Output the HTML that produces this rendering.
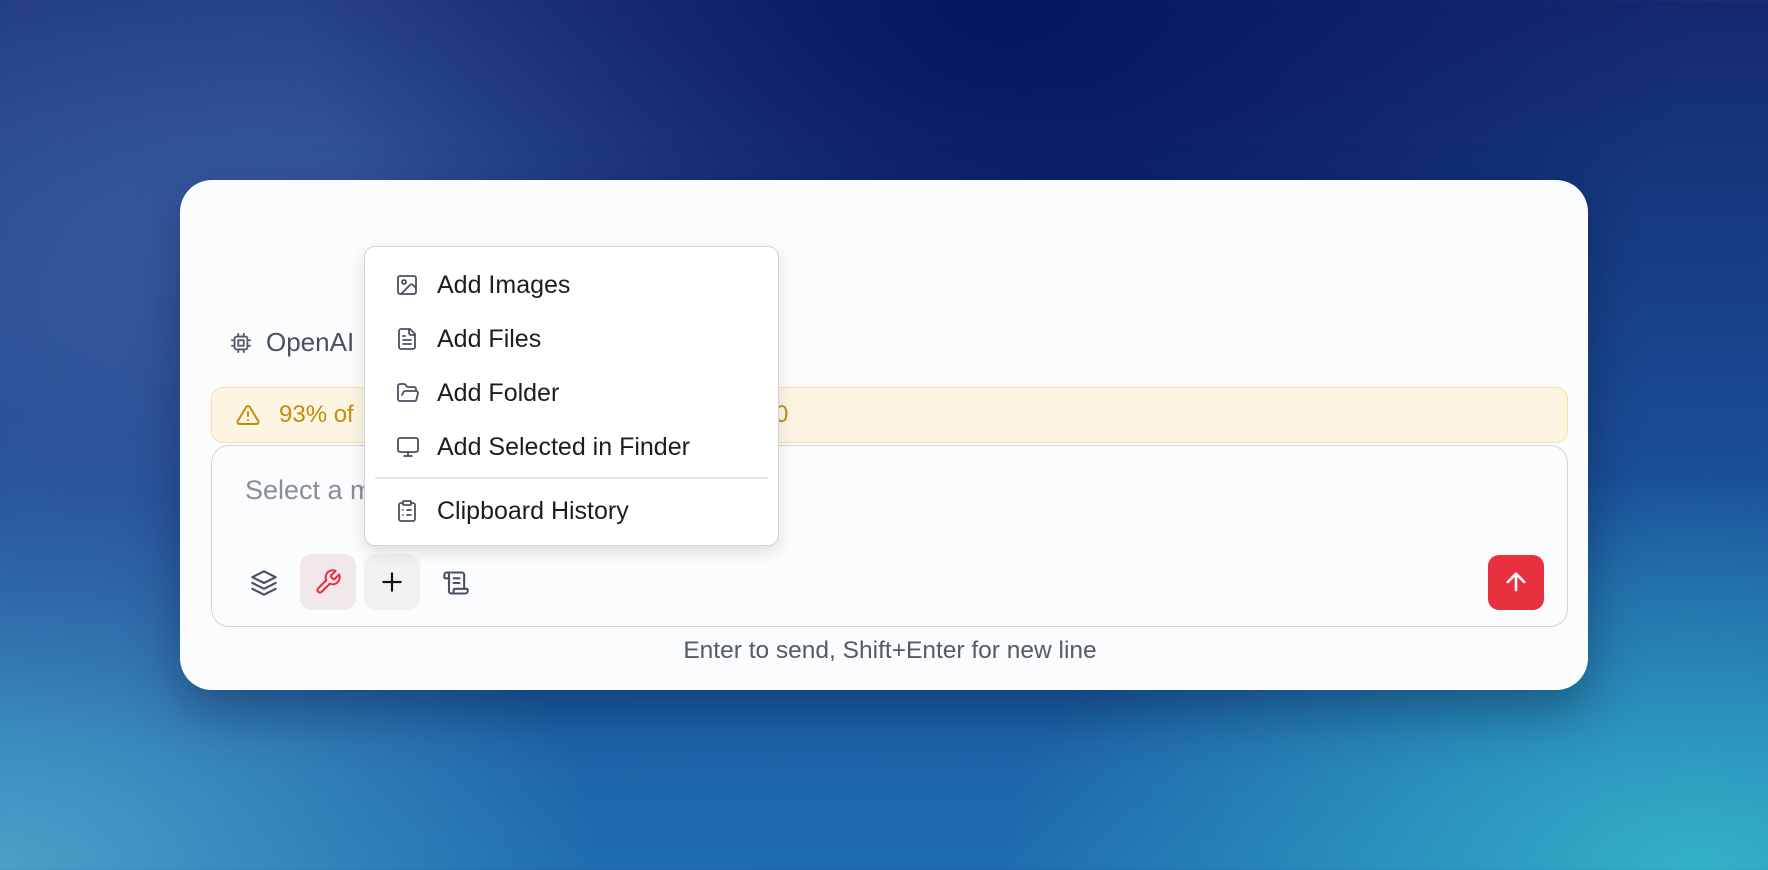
<!DOCTYPE html>
<html><head><meta charset="utf-8"><style>
*{margin:0;padding:0;box-sizing:border-box}
body{width:1768px;height:870px;overflow:hidden;font-family:"Liberation Sans",sans-serif;position:relative;
background:
radial-gradient(ellipse 700px 500px at 1000px 0px,#061560 0%,rgba(6,21,96,0) 100%),
radial-gradient(ellipse 900px 500px at 250px 250px,#3a5aa0 0%,rgba(58,90,160,0) 100%),
radial-gradient(ellipse 700px 400px at 1700px 870px,#33b0c8 0%,rgba(51,176,200,0) 100%),
radial-gradient(ellipse 600px 400px at 0px 870px,#4aa0c8 0%,rgba(74,160,200,0) 100%),
linear-gradient(180deg,#14286e 0%,#1a4f98 55%,#1f6cb0 100%);}
.abs{position:absolute}
.card{left:180px;top:180px;width:1408px;height:510px;background:#fbfcfe;border-radius:32px;box-shadow:0 20px 50px rgba(0,10,40,.35)}
.txt{white-space:nowrap;line-height:1}
svg{display:block}
.menu{left:364px;top:246px;width:415px;height:300px;background:#fff;border:1.5px solid #d3d3d8;border-radius:11px;box-shadow:0 6px 16px rgba(0,0,0,.12)}
.mi{position:absolute;left:0;width:100%;height:30px}
.mi svg{position:absolute;left:30px;top:3px}
.mi span{position:absolute;left:72px;top:1px;font-size:25px;color:#1b1d22;white-space:nowrap}
</style></head><body>
<div class="abs card"></div>

<svg class="abs" style="left:230px;top:332px" width="22" height="22" viewBox="0 0 24 24" fill="none" stroke="#555b66" stroke-width="2" stroke-linecap="round"><rect x="5" y="5" width="14" height="14" rx="2"/><rect x="9" y="9" width="6" height="6"/><path d="M9 2v3M15 2v3M9 19v3M15 19v3M2 9h3M2 15h3M19 9h3M19 15h3"/></svg>
<div class="abs txt" style="left:266px;top:329px;font-size:26px;color:#4b5060">OpenAI</div>

<div class="abs" style="left:211px;top:387px;width:1357px;height:56px;background:#fcf5e2;border:1.5px solid #f4e2a6;border-radius:12px"></div>
<svg class="abs" style="left:235px;top:403px" width="26" height="24" viewBox="0 0 24 24" fill="none" stroke="#c98a0a" stroke-width="2" stroke-linecap="round" stroke-linejoin="round"><path d="M10.3 3.9 1.8 18a2 2 0 0 0 1.7 3h17a2 2 0 0 0 1.7-3L13.7 3.9a2 2 0 0 0-3.4 0z"/><path d="M12 9v4M12 17h.01"/></svg>
<div class="abs txt" style="left:279px;top:403px;font-size:24px;color:#c98a0a">93% of</div>
<div class="abs txt" style="left:775px;top:403px;font-size:24px;color:#c98a0a">0</div>

<div class="abs" style="left:211px;top:445px;width:1357px;height:182px;background:#fbfcfe;border:1.5px solid #d4d4d9;border-radius:18px"></div>
<div class="abs txt" style="left:245px;top:477px;font-size:27px;color:#8a8d95">Select a model to start chatting...</div>

<svg class="abs" style="left:250px;top:569px" width="28" height="28" viewBox="0 0 24 24" fill="none" stroke="#4b5060" stroke-width="1.8" stroke-linecap="round" stroke-linejoin="round"><path d="M12 2 2 7l10 5 10-5-10-5z"/><path d="m2 12 10 5 10-5"/><path d="m2 17 10 5 10-5"/></svg>
<div class="abs" style="left:300px;top:554px;width:56px;height:56px;background:#f1e8eb;border-radius:12px"></div>
<svg class="abs" style="left:314px;top:568px" width="28" height="28" viewBox="0 0 24 24" fill="none" stroke="#e8303f" stroke-width="1.8" stroke-linecap="round" stroke-linejoin="round"><path d="M14.7 6.3a1 1 0 0 0 0 1.4l1.6 1.6a1 1 0 0 0 1.4 0l3.77-3.77a6 6 0 0 1-7.94 7.94l-6.91 6.910a2.12 2.12 0 0 1-3-3l6.91-6.91a6 6 0 0 1 7.94-7.94l-3.76 3.76z"/></svg>
<div class="abs" style="left:364px;top:554px;width:56px;height:56px;background:#f2f2f5;border-radius:12px"></div>
<svg class="abs" style="left:379px;top:569px" width="26" height="26" viewBox="0 0 24 24" fill="none" stroke="#111" stroke-width="2" stroke-linecap="round"><path d="M12 4v16M4 12h16"/></svg>
<svg class="abs" style="left:442px;top:569px" width="28" height="28" viewBox="0 0 24 24" fill="none" stroke="#4b5060" stroke-width="1.8" stroke-linecap="round" stroke-linejoin="round"><path d="M15 12h-5M15 8h-5M19 17V5a2 2 0 0 0-2-2H4"/><path d="M8 21h12a2 2 0 0 0 2-2v-1a1 1 0 0 0-1-1H11a1 1 0 0 0-1 1v1a2 2 0 1 1-4 0V5a2 2 0 1 0-4 0v2a1 1 0 0 0 1 1h3"/></svg>
<div class="abs" style="left:1488px;top:555px;width:56px;height:55px;background:#e9303f;border-radius:11px"></div>
<svg class="abs" style="left:1502px;top:568px" width="28" height="28" viewBox="0 0 24 24" fill="none" stroke="#fff" stroke-width="2.2" stroke-linecap="round" stroke-linejoin="round"><path d="M12 19V5M5 12l7-7 7 7"/></svg>

<div class="abs txt" style="left:0;width:1780px;text-align:center;top:639px;font-size:24.5px;color:#555a63">Enter to send, Shift+Enter for new line</div>

<div class="abs menu">
 <div class="mi" style="top:23px"><svg width="24" height="24" viewBox="0 0 24 24" fill="none" stroke="#4b5060" stroke-width="1.8" stroke-linecap="round" stroke-linejoin="round"><rect x="3" y="3" width="18" height="18" rx="2"/><circle cx="9" cy="9" r="2"/><path d="m21 15-3.1-3.1a2 2 0 0 0-2.8 0L6 21"/></svg><span>Add Images</span></div>
 <div class="mi" style="top:77px"><svg width="24" height="24" viewBox="0 0 24 24" fill="none" stroke="#4b5060" stroke-width="1.8" stroke-linecap="round" stroke-linejoin="round"><path d="M15 2H6a2 2 0 0 0-2 2v16a2 2 0 0 0 2 2h12a2 2 0 0 0 2-2V7z"/><path d="M14 2v4a2 2 0 0 0 2 2h4M10 9H8M16 13H8M16 17H8"/></svg><span>Add Files</span></div>
 <div class="mi" style="top:131px"><svg width="26" height="24" viewBox="0 0 24 24" fill="none" stroke="#4b5060" stroke-width="1.8" stroke-linecap="round" stroke-linejoin="round"><path d="m6 14 1.5-2.9A2 2 0 0 1 9.24 10H20a2 2 0 0 1 1.94 2.5l-1.54 6a2 2 0 0 1-1.950 1.5H4a2 2 0 0 1-2-2V5a2 2 0 0 1 2-2h3.9a2 2 0 0 1 1.69.9l.81 1.2a2 2 0 0 0 1.67.9H18a2 2 0 0 1 2 2v2"/></svg><span>Add Folder</span></div>
 <div class="mi" style="top:185px"><svg width="26" height="24" viewBox="0 0 24 24" fill="none" stroke="#4b5060" stroke-width="1.8" stroke-linecap="round" stroke-linejoin="round"><rect x="2" y="3" width="20" height="14" rx="2"/><path d="M8 21h8M12 17v4"/></svg><span>Add Selected in Finder</span></div>
 <div class="abs" style="left:10px;top:230px;width:393px;height:1.5px;background:#e6e4e8"></div>
 <div class="mi" style="top:249px"><svg width="24" height="24" viewBox="0 0 24 24" fill="none" stroke="#4b5060" stroke-width="1.8" stroke-linecap="round" stroke-linejoin="round"><rect x="8" y="2" width="8" height="4" rx="1"/><path d="M16 4h2a2 2 0 0 1 2 2v14a2 2 0 0 1-2 2H6a2 2 0 0 1-2-2V6a2 2 0 0 1 2-2h2M12 11h4M12 16h4M8 11h.01M8 16h.01"/></svg><span>Clipboard History</span></div>
</div>
</body></html>
